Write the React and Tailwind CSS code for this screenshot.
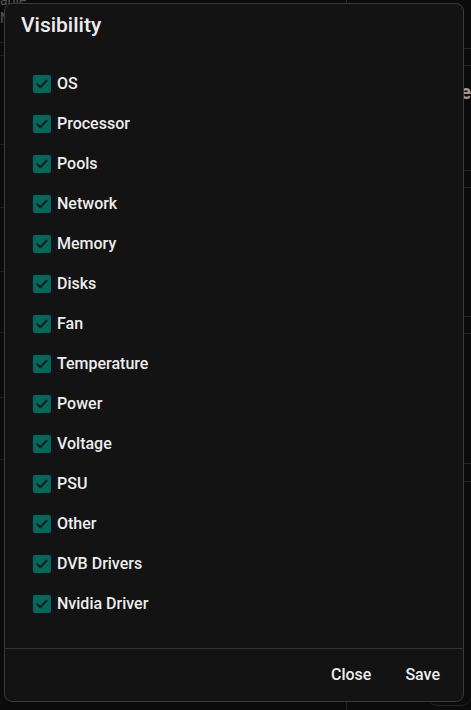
import React from "react";

const items = [
  "OS",
  "Processor",
  "Pools",
  "Network",
  "Memory",
  "Disks",
  "Fan",
  "Temperature",
  "Power",
  "Voltage",
  "PSU",
  "Other",
  "DVB Drivers",
  "Nvidia Driver",
];

function Check() {
  return (
    <span className="flex h-[18px] w-[18px] shrink-0 items-center justify-center rounded-[2px] bg-[#00695c]">
      <svg width="14" height="14" viewBox="0 0 24 24" fill="none">
        <path d="M4 12.5l5 5L20 6.5" stroke="#111" strokeWidth="3" strokeLinecap="square" />
      </svg>
    </span>
  );
}

export default function App() {
  return (
    <div
      className="relative h-[710px] w-[471px] overflow-hidden bg-[#0b0b0b]"
      style={{ fontFamily: "Roboto, 'Liberation Sans', sans-serif" }}
    >
      {/* background page */}
      <div className="flex h-full">
        <div className="flex w-[371px] flex-col">
          <div className="h-[43px] border-b border-[#1f1f1f] text-[14px] leading-[16px] text-[#555]">
            <div className="-mt-[8px]">able</div>
            <div className="mt-[2px]">N</div>
          </div>
          <div className="h-[13px] border-b border-[#1f1f1f]" />
          <div className="h-[89px] border-b border-[#1f1f1f]" />
          <div className="h-[63px] border-b border-[#1f1f1f]" />
          <div className="h-[64px] border-b border-[#1f1f1f]" />
          <div className="h-[61px] border-b border-[#1f1f1f]" />
          <div className="h-[65px] border-b border-[#1f1f1f]" />
          <div className="h-[62px] border-b border-[#1f1f1f]" />
        </div>
        <div className="flex flex-1 flex-col border-l border-[#262626] pl-[80px] text-[#9a9a9a]">
          <div className="h-[49px] border-b border-[#262626]" />
          <div className="h-[17px] border-b border-[#262626]" />
          <div className="h-[105px] border-b border-[#262626] pt-[14px] text-[20px] font-bold leading-6">Type</div>
          <div className="h-[17px] border-b border-[#262626]" />
          <div className="h-[129px] border-b border-[#262626] pt-[16px] text-[20px] font-bold leading-6">Bag</div>
          <div className="h-[17px] border-b border-[#262626]" />
          <div className="h-[130px] border-b border-[#262626]" />
          <div className="h-[18px] border-b border-[#262626]" />
          <div className="h-[224px] rounded-b-[10px] border-b border-[#262626] pt-[4px]">
            <div className="text-[20px] font-bold leading-6">Da</div>
            <div className="mt-[14px] text-[16px] leading-5">No</div>
            <div className="mt-[8px] text-[12px] leading-4">4</div>
            <div className="mt-[2px] text-[12px] leading-4">1</div>
            <div className="mt-[2px] text-[12px] leading-4">1</div>
          </div>
        </div>
      </div>

      {/* dialog overlay */}
      <div className="absolute inset-0 flex pl-[4px] pt-[3px]">
        <div className="flex h-[699px] w-[460px] flex-col rounded-[8px] border border-[#3a3a3a] bg-[#131313] text-[#ededed]">
          <div className="px-4 pt-[7px] text-[21px] font-medium leading-7">Visibility</div>
          <div className="mt-[25px] flex flex-col pl-[28px]">
            {items.map((it) => (
              <label key={it} className="flex h-[40px] items-center gap-[6px]">
                <Check />
                <span className="text-[16px] font-medium leading-5">{it}</span>
              </label>
            ))}
          </div>
          <div className="mt-auto flex h-[53px] items-center justify-end gap-[18px] border-t border-[#333] pr-[15px]">
            <button className="px-2 py-1 text-[16px] font-medium leading-6">Close</button>
            <button className="px-2 py-1 text-[16px] font-medium leading-6">Save</button>
          </div>
        </div>
      </div>
    </div>
  );
}
